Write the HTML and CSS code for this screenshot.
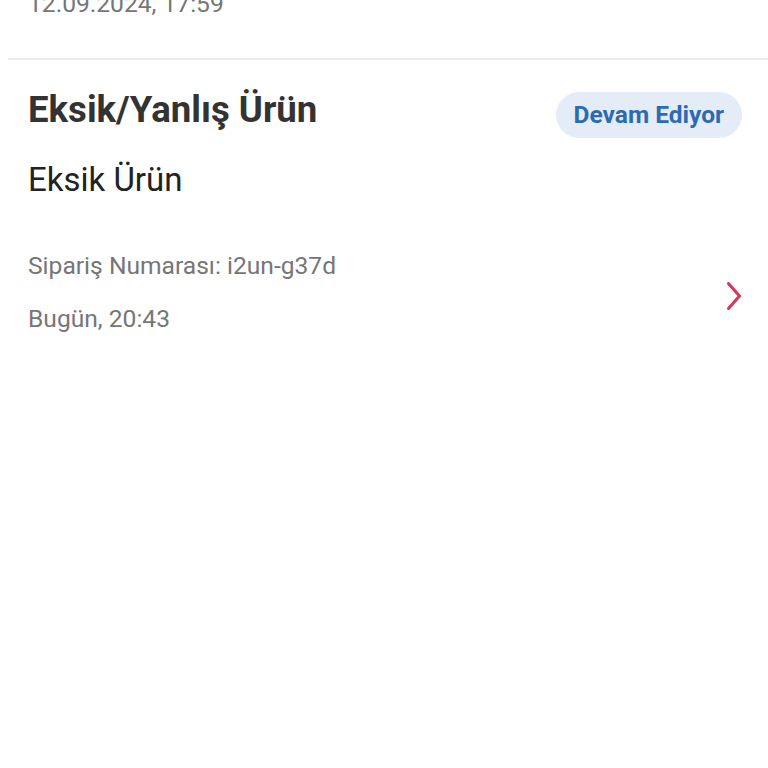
FILE: index.html
```html
<!DOCTYPE html>
<html lang="tr">
<head>
<meta charset="utf-8">
<link rel="stylesheet" href="styles.css">
</head>
<body>
<div class="list">
  <div class="item prev">
    <div class="meta-line">12.09.2024, 17:59</div>
  </div>
  <div class="item">
    <div class="head">
      <div class="title">Eksik/Yanlış Ürün</div>
      <div class="badge">Devam Ediyor</div>
    </div>
    <div class="subtitle">Eksik Ürün</div>
    <div class="meta">
      <div class="meta-text">
        <div class="meta-line">Sipariş Numarası: i2un-g37d</div>
        <div class="meta-line gap">Bugün, 20:43</div>
      </div>
      <svg class="chev" width="16" height="30" viewBox="0 0 16 30"><path d="M2.5 2.5 L13.5 15 L2.5 27.5" fill="none" stroke="#d7365c" stroke-width="3" stroke-linecap="round" stroke-linejoin="round"/></svg>
    </div>
  </div>
</div>
</body>
</html>
```
FILE: styles.css
```css
html, body {
  margin: 0;
  padding: 0;
  background: #ffffff;
  font-family: Roboto, "Noto Sans", sans-serif;
}
.list {
  margin-left: 8px;
}
.item {
  padding: 29px 26px 0 20px;
}
.item.prev {
  margin-top: -10px;
  padding-top: 0;
  padding-bottom: 40px;
  border-bottom: 2px solid #ededed;
}
.head {
  display: flex;
  justify-content: space-between;
  align-items: flex-start;
}
.title {
  font-size: 36.6px;
  line-height: 42px;
  font-weight: 700;
  color: #333333;
}
.badge {
  margin-top: 3px;
  height: 46px;
  line-height: 46px;
  padding: 0 18px;
  border-radius: 23px;
  background: #e4edf7;
  color: #2c6bb3;
  font-size: 24.5px;
  font-weight: 700;
}
.subtitle {
  margin-top: 22px;
  font-size: 33px;
  line-height: 39px;
  color: #222222;
}
.meta {
  margin-top: 53px;
  display: flex;
  justify-content: space-between;
  align-items: center;
}
.meta-line {
  font-size: 24.6px;
  line-height: 28px;
  color: #767676;
}
.meta-line.gap {
  margin-top: 25px;
}
.chev {
  margin-top: 7px;
  display: block;
}
```
